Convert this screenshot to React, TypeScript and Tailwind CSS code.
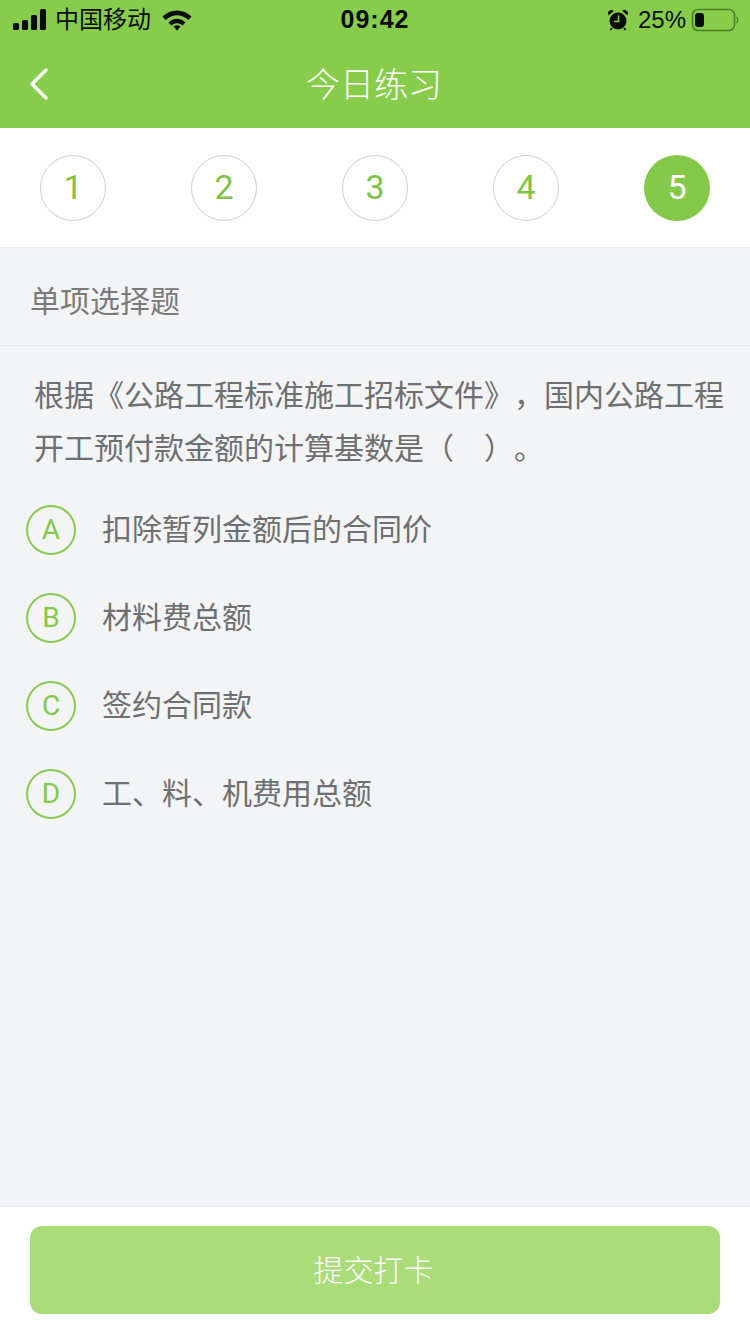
const FONT = "font-['Liberation_Sans','Noto_Sans_CJK_SC',sans-serif]";
const THIN = "font-['Roboto','Liberation_Sans',sans-serif] font-normal";

function Signal() {
  return (
    <svg width="34" height="22" viewBox="0 0 34 22" className="block">
      <rect x="0" y="14" width="6" height="7" rx="1.5" fill="#0b0b0b" />
      <rect x="9" y="11" width="6" height="10" rx="1.5" fill="#0b0b0b" />
      <rect x="18" y="6" width="6" height="15" rx="1.5" fill="#0b0b0b" />
      <rect x="27" y="0" width="6" height="21" rx="1.5" fill="#0b0b0b" />
    </svg>
  );
}

function Wifi() {
  return (
    <svg width="30" height="22" viewBox="0 0 30 22" className="block">
      <path d="M0.5 7.5 C8.5 -0.5 21.5 -0.5 29.5 7.5 L26.5 11 C19 4.5 11 4.5 3.5 11 Z" fill="#0b0b0b" />
      <path d="M6.5 13.5 C11.5 8.5 18.5 8.5 23.5 13.5 L20.5 16.5 C17 13.5 13 13.5 9.5 16.5 Z" fill="#0b0b0b" />
      <path d="M11.5 17.5 C13.5 15.8 16.5 15.8 18.5 17.5 L15 21.5 Z" fill="#0b0b0b" />
    </svg>
  );
}

function Alarm() {
  return (
    <svg width="22" height="22" viewBox="0 0 22 22" className="block">
      <circle cx="11" cy="12" r="8.5" fill="#0b0b0b" />
      <path d="M1.5 6.5 L7 1.8 L4 0.8 L1 3 Z M20.5 6.5 L15 1.8 L18 0.8 L21 3 Z" fill="#0b0b0b" />
      <path d="M5 19 L3.5 21 M17 19 L18.5 21" stroke="#0b0b0b" strokeWidth="1.6" />
      <path d="M11.5 6.5 V12.5 H7" stroke="#87cd4b" strokeWidth="1.6" fill="none" />
    </svg>
  );
}

function Battery() {
  return (
    <svg width="48" height="24" viewBox="0 0 48 24" className="block">
      <rect x="1.5" y="1.5" width="42" height="21" rx="5.5" fill="none" stroke="#4c7f28" strokeWidth="1.6" />
      <rect x="4" y="5" width="9" height="14" rx="3" fill="#0b0b0b" />
      <path d="M45.5 9 C47 10 47 14 45.5 15" stroke="#4c7f28" strokeWidth="1.4" fill="none" />
    </svg>
  );
}

function Step({ n, active }: { n: number; active?: boolean }) {
  return (
    <div
      className={
        active
          ? `flex h-[66px] w-[66px] items-center justify-center rounded-full bg-[#84c94a] text-[34px] text-white ${THIN}`
          : `flex h-[66px] w-[66px] items-center justify-center rounded-full border border-[#cfcfcf] text-[34px] text-[#7fc348] ${THIN}`
      }
    >
      {n}
    </div>
  );
}

function Option({ letter, text }: { letter: string; text: string }) {
  return (
    <div className="flex h-[88px] items-center">
      <div className={`flex h-[50px] w-[50px] items-center justify-center rounded-full border-2 border-[#8bcb55] text-[28px] text-[#84c94a] ${THIN}`}>
        {letter}
      </div>
      <div className="ml-[26px] text-[30px] leading-[44px] text-[#6e6f71]">{text}</div>
    </div>
  );
}

export default function App() {
  return (
    <div className={`flex h-[1334px] w-[750px] flex-col overflow-hidden bg-[#f3f4f6] ${FONT}`}>
      <div className="h-[128px] shrink-0 bg-[#87cd4b]">
        <div className="relative flex h-[40px] items-center pl-[13px] pr-[11px] text-[#0b0b0b]">
          <Signal />
          <span className="ml-[8px] text-[24px] leading-none">中国移动</span>
          <span className="ml-[11px]"><Wifi /></span>
          <span className="absolute left-0 right-0 text-center text-[25px] font-bold tracking-[1px]">09:42</span>
          <span className="ml-auto"><Alarm /></span>
          <span className="ml-[9px] text-[24px] leading-none">25%</span>
          <span className="ml-[5px]"><Battery /></span>
        </div>
        <div className="relative flex h-[88px] items-center justify-center pt-[2px] pr-[2px]">
          <svg width="20" height="32" viewBox="0 0 20 32" className="absolute left-[29px] top-[28px]">
            <path d="M17 2 L3 16 L17 30" fill="none" stroke="#ffffff" strokeWidth="3.4" strokeLinecap="round" strokeLinejoin="round" />
          </svg>
          <span className="text-[34px] leading-none text-white font-light">今日练习</span>
        </div>
      </div>

      <div className="flex h-[120px] shrink-0 items-center justify-between border-b border-[#e9e9e9] bg-white px-[40px]">
        <Step n={1} />
        <Step n={2} />
        <Step n={3} />
        <Step n={4} />
        <Step n={5} active />
      </div>

      <div className="flex h-[98px] shrink-0 items-center border-b border-[#e9eaec] pl-[30px] pt-[10px] text-[30px] text-[#7a7a7a]">
        单项选择题
      </div>

      <div className="grow">
        <div className="px-[34px] pt-[23px] text-[30px] leading-[53px] text-[#6e6f71] [text-spacing-trim:space-all]">
          <div className="whitespace-nowrap">根据《公路工程标准施工招标文件》，国内公路工程</div>
          <div className="whitespace-nowrap">开工预付款金额的计算基数是（　）。</div>
        </div>
        <div className="pl-[26px] pt-[11px]">
          <Option letter="A" text="扣除暂列金额后的合同价" />
          <Option letter="B" text="材料费总额" />
          <Option letter="C" text="签约合同款" />
          <Option letter="D" text="工、料、机费用总额" />
        </div>
      </div>

      <div className="h-[128px] shrink-0 border-t border-[#e6e7e9] bg-white px-[30px] pt-[19px]">
        <div className="flex h-[88px] items-center justify-center rounded-[12px] bg-[#aadc79] pr-[3px] text-[30px] font-light text-white">
          提交打卡
        </div>
      </div>
    </div>
  );
}
